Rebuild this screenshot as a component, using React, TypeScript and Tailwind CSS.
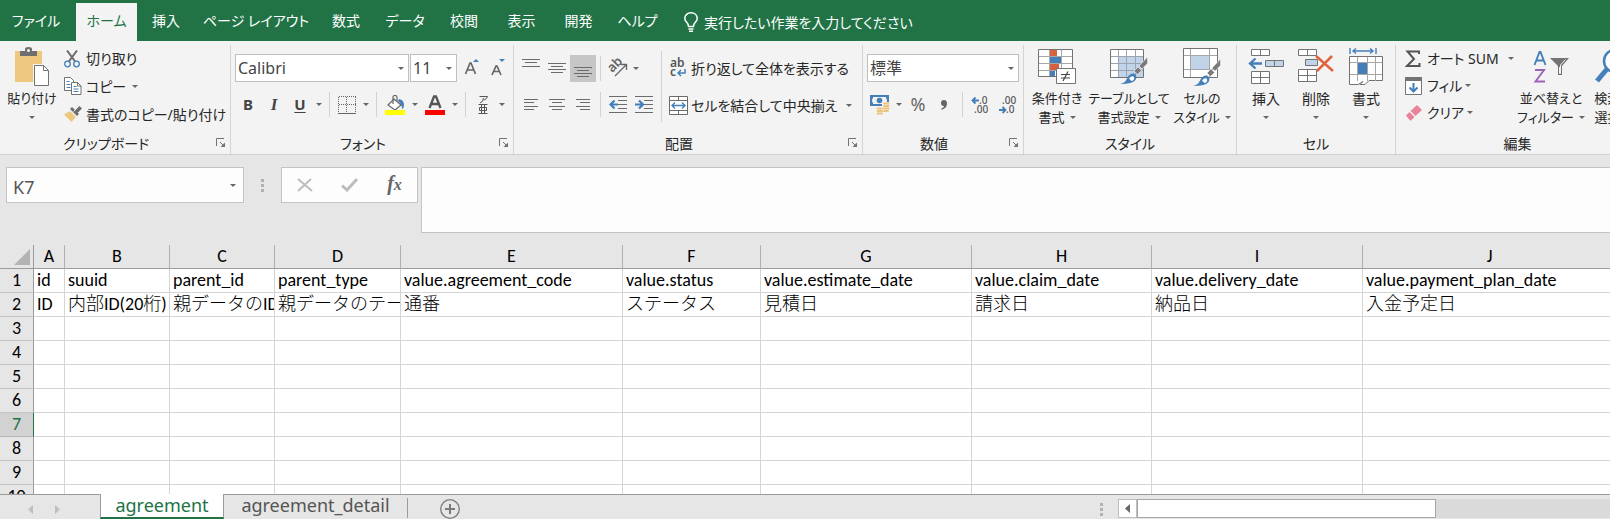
import React from 'react';
import type { ReactNode } from 'react';

const GRAY = '#737373';
const BLUE = '#457fb9';

/* ---------- small building blocks ---------- */

function Arrow({ className = '' }: { className?: string }) {
  return (
    <svg viewBox="0 0 6 3" className={`h-[3px] w-[6px] shrink-0 ${className}`} aria-hidden="true">
      <path d="M0 0h6L3 3z" fill="#666" />
    </svg>
  );
}

function Tool({ label, className = 'w-[26px]', children }: { label: string; className?: string; children: ReactNode }) {
  return (
    <button type="button" aria-label={label} className={`flex h-[27px] shrink-0 items-center justify-center ${className}`}>
      {children}
    </button>
  );
}

function Sep({ className = 'w-[9px]' }: { className?: string }) {
  return (
    <span className={`flex shrink-0 justify-center ${className}`}>
      <span className="h-[25px] w-px bg-[#d2d2d2]" />
    </span>
  );
}

function Combo({ label, value, className }: { label: string; value: string; className: string }) {
  return (
    <span className={`relative flex h-7 shrink-0 items-center border border-[#c0c0c0] bg-white ${className}`}>
      <select aria-label={label} className="h-full w-full appearance-none bg-transparent pl-[2px] text-[16px] text-[#444] outline-none">
        <option>{value}</option>
      </select>
      <Arrow className="pointer-events-none absolute right-[4px]" />
    </span>
  );
}

function Group({ title, className, launcher, children }: { title: string; className: string; launcher?: boolean; children: ReactNode }) {
  return (
    <section className={`flex shrink-0 flex-col border-r border-[#d4d4d4] ${className}`}>
      <div className="flex h-[88px]">{children}</div>
      <div className="flex h-[20px] items-center">
        <span className="flex-1 text-center">{title}</span>
        {launcher && (
          <button type="button" aria-label={`${title}の詳細`} className="flex w-[18px] items-center pl-1">
            <svg viewBox="0 0 10 10" className="h-[10px] w-[10px]" fill="none" stroke={GRAY}>
              <path d="M.5 8V.5H8M4 4l4 4" />
              <path d="M9 4.5V9H4.5z" fill={GRAY} stroke="none" />
            </svg>
          </button>
        )}
      </div>
    </section>
  );
}

function BigButton({ icon, lines, className }: { icon: ReactNode; lines: string[]; className: string }) {
  return (
    <button type="button" className={`flex shrink-0 flex-col items-center whitespace-nowrap leading-[19px] ${className}`}>
      <span className="flex h-[44px] items-center justify-center">{icon}</span>
      <span>{lines[0]}</span>
      <span className="flex h-[19px] items-center gap-[5px]">
        {lines[1]}
        <Arrow />
      </span>
    </button>
  );
}

function TextButton({ icon, label, arrow, className = 'h-7 gap-[9px]' }: { icon: ReactNode; label: string; arrow?: boolean; className?: string }) {
  return (
    <button type="button" className={`flex items-center whitespace-nowrap ${className}`}>
      <span className="flex items-center">
        <span className="flex w-[22px] shrink-0 items-center">{icon}</span>
        <span>{label}</span>
      </span>
      {arrow && <Arrow />}
    </button>
  );
}

/* ---------- icons ---------- */

const PasteIcon = () => (
  <svg viewBox="0 0 36 40" className="h-[40px] w-[36px]">
    <path d="M1 4h27v31H1z" fill="#edc87e" />
    <path d="M6 4h5V2q0-2 3.500-2T18 2v2h5v5H6z" fill="#6f6f6f" />
    <circle cx="14.500" cy="3.500" r="1.500" fill="#f3f3f3" />
    <path d="M19 17h12l6 6v17H19z" fill="#f3f3f3" />
    <path d="M20.500 18.500h9l5 5v15h-14z" fill="#fff" stroke={GRAY} />
    <path d="M29.500 18.500v5h5" fill="none" stroke={GRAY} />
  </svg>
);

const CutIcon = () => (
  <svg viewBox="0 0 16 18" className="h-[18px] w-[16px]" fill="none">
    <path d="M3 .500l8.500 11.500M13 .500L4.500 12" stroke="#6b6b6b" strokeWidth="2" />
    <circle cx="3.500" cy="14" r="2.800" stroke={BLUE} strokeWidth="1.300" />
    <circle cx="12.500" cy="14" r="2.800" stroke={BLUE} strokeWidth="1.300" />
  </svg>
);

const CopyIcon = () => (
  <svg viewBox="0 0 18 18" className="h-[18px] w-[18px]" fill="none">
    <path d="M.500.500h6l3 3v10h-9z" fill="#fff" stroke={GRAY} />
    <path d="M2.500 4.500h3M2.500 7.500h4M2.500 10.500h4" stroke={BLUE} />
    <path d="M7.500 5.500h6l3.500 3.500v8.500h-9.500z" fill="#fff" stroke={GRAY} />
    <path d="M13.500 5.500v3.500H17" stroke={GRAY} />
    <path d="M9.500 9.500h3M9.500 12h5M9.500 14.500h5" stroke={BLUE} />
  </svg>
);

const PainterIcon = () => (
  <svg viewBox="0 0 18 16" className="h-[16px] w-[18px]">
    <path d="M0 8.500l6-3.500 6 6-4.500 5z" fill="#edc87e" />
    <path d="M6 3l2-2 7 7-2 2z" fill="#6b6b6b" />
    <path d="M11 4.500L15.500 0 18 2.500 13.500 7z" fill="#6b6b6b" />
    <path d="M9.500 5.500l3-3" stroke="#f3f3f3" />
  </svg>
);

const LetterSize = ({ up }: { up?: boolean }) => (
  <svg viewBox="0 0 18 20" className="h-[20px] w-[18px]">
    <path d={up ? 'M2.500 16L7 5h1l4.500 11M4.300 12h6.400' : 'M3 17L7 8h1l4 9M4.500 13.500h6'} fill="none" stroke="#666" strokeWidth="1.700" />
    {up ? <path d="M10 4h6L13 1z" fill={BLUE} /> : <path d="M10 1h6L13 4z" fill={BLUE} />}
  </svg>
);

const BorderIcon = () => (
  <svg viewBox="0 0 18 18" className="h-[18px] w-[18px]" stroke="#666" fill="none">
    <path d="M.500.500h17M.500 8.500h17M.500.500v16M8.500.500v16M17.500.500v16" strokeDasharray="1 1" shapeRendering="crispEdges" />
    <path d="M0 17.500h18" shapeRendering="crispEdges" />
  </svg>
);

const FillIcon = () => (
  <svg viewBox="0 0 20 20" className="h-[20px] w-[20px]" fill="none">
    <path d="M9 4L16 10l-6 5-7-5z" fill="#fff" stroke="#666" strokeWidth="1.200" />
    <path d="M8 9V2.500Q8 .500 10 .500T12 2.500V6" stroke="#666" strokeWidth="1.200" />
    <path d="M14 4q5 1 5 6 0 3-2 4 0-5-4-8z" fill={BLUE} />
    <path d="M0 15h20v5H0z" fill="#ff0" />
  </svg>
);

const FontColorIcon = () => (
  <svg viewBox="0 0 20 20" className="h-[20px] w-[20px]" fill="none">
    <path d="M4.500 13L9 1.500h2L15.500 13M6 9h8" stroke="#555" strokeWidth="2.300" />
    <path d="M0 15h20v5H0z" fill="#f00" />
  </svg>
);

const HLines = ({ rows, width = 18, height = 18 }: { rows: [number, number, number][]; width?: number; height?: number }) => (
  <svg width={width} height={height} stroke="#6b6b6b" shapeRendering="crispEdges">
    {rows.map(([x1, x2, y]) => (
      <path key={y} d={`M${x1} ${y}.500H${x2}`} />
    ))}
  </svg>
);

const OrientationIcon = () => (
  <svg viewBox="0 0 20 20" className="h-[20px] w-[20px] overflow-visible" fill="none">
    <text x="0" y="11" transform="rotate(-45 7 8)" fill="#666" fontSize="13" fontWeight="600" fontFamily="Noto Sans">ab</text>
    <path d="M7 18L18 7M18.500 12V6.500H13" stroke="#666" strokeWidth="1.300" />
  </svg>
);

const IndentIcon = ({ right }: { right?: boolean }) => (
  <svg viewBox="0 0 18 17" className="h-[17px] w-[18px]" fill="none">
    <path d="M0 .500h18M9 4.500h9M9 8.500h9M9 12.500h9M0 16.500h18" stroke="#6b6b6b" shapeRendering="crispEdges" />
    <path d={right ? 'M0 8.500h7M4 4.500l4 4-4 4' : 'M9 8.500H2M5.500 4.500l-4 4 4 4'} stroke={BLUE} strokeWidth="2.200" />
  </svg>
);

const WrapIcon = () => (
  <svg viewBox="0 0 18 20" className="h-[20px] w-[18px] overflow-visible" fill="none">
    <text x="1" y="9" fill="#555" fontSize="12" fontWeight="600" fontFamily="Noto Sans">ab</text>
    <text x="1" y="18" fill="#555" fontSize="12" fontWeight="600" fontFamily="Noto Sans">c</text>
    <path d="M16 11v4H9M12 12l-3 3 3 3" stroke={BLUE} strokeWidth="1.500" />
  </svg>
);

const MergeIcon = () => (
  <svg viewBox="0 0 19 19" className="h-[19px] w-[19px]" fill="#fff" stroke="#6b6b6b">
    <path d="M.500.500h18v18H.500zM.500 4.500h18M.500 14.500h18M9.500.500v4M9.500 14.500v4" />
    <path d="M3 9.500h13M6 6.500l-3 3 3 3M13 6.500l3 3-3 3" stroke={BLUE} strokeWidth="1.400" fill="none" />
  </svg>
);

const CurrencyIcon = () => (
  <svg viewBox="0 0 20 20" className="h-[20px] w-[20px]">
    <path d="M0 0h19v11H0z" fill={BLUE} />
    <path d="M3 2h13v1q1 1 1 2.500T16 8v1H3V8Q2 7 2 5.500T3 3z" fill="#f3f3f3" />
    <circle cx="9.500" cy="5.500" r="2.800" fill={BLUE} />
    <path d="M12 7h8v11h-5v2H6v-8h6z" fill="#f3f3f3" />
    <path d="M14 8.500h4.500M14 11h4.500M14 13.500h4.500M14 16h4M7.500 13.500h4.500M7.500 16h4.500M7.500 18.500h4.500" stroke="#edc27a" strokeWidth="1.800" strokeLinecap="round" />
  </svg>
);

const DecimalIcon = ({ decrease }: { decrease?: boolean }) => (
  <svg viewBox="0 0 18 20" className="h-[20px] w-[18px] overflow-visible" fill="none">
    <text x={decrease ? 4 : 7} y="9" fill="#555" fontSize="10" fontWeight="500" fontFamily="Noto Sans">{decrease ? '.00' : '.0'}</text>
    <text x={decrease ? 8 : 2} y="18" fill="#555" fontSize="10" fontWeight="500" fontFamily="Noto Sans">{decrease ? '.0' : '.00'}</text>
    <path d={decrease ? 'M1 15h6M4.500 12l3 3-3 3' : 'M7 5.500H1M3.500 2.500l-3 3 3 3'} stroke={BLUE} strokeWidth="1.800" />
  </svg>
);

const ConditionalIcon = () => (
  <svg viewBox="0 0 38 36" className="h-[36px] w-[38px]" fill="none">
    <path d="M.500.500h34v27h-34z" fill="#fff" stroke={GRAY} />
    <path d="M11.500 1v26M23.500 1v26M1 7.500h33M1 14.500h33M1 21.500h33" stroke="#a6a6a6" />
    <path d="M12 1h7v6h-7zM12 15h9v6h-9z" fill="#d9603d" />
    <path d="M12 8h11v6H12zM12 22h5v5h-5z" fill={BLUE} />
    <path d="M18.500 19.500h19v15h-19z" fill="#fff" stroke={GRAY} />
    <path d="M23 25.500h9M23 29h9M30 22.500l-5 9.500" stroke="#444" strokeWidth="1.200" />
  </svg>
);

const Brush = () => (
  <>
    <path d="M37.500 8v6.500l-5.500 5.500-3-3zM28 18l3.500 3.500-4 4-3.500-3.500z" fill="#7b7b7b" stroke="#f3f3f3" strokeWidth=".600" />
    <path d="M10 35q5-1 7-5.500 2.500-5.500 7-5 4 2.500 1.500 6.500T10 35z" fill={BLUE} />
    <path d="M19 29.500q3-3.500 5-1.500 1 3-2.500 4z" fill="#fff" />
  </>
);

const TableFormatIcon = () => (
  <svg viewBox="0 0 38 36" className="h-[36px] w-[38px]" fill="none">
    <path d="M.500.500h33v28H.500z" fill="#fff" stroke={GRAY} />
    <path d="M9 8h24v20H9z" fill="#c0d3e9" />
    <path d="M8.500 1v27M16.500 1v27M25.500 1v27M1 7.500h32M1 14.500h32M1 21.500h32" stroke="#9ba5b0" />
    <Brush />
  </svg>
);

const CellStyleIcon = () => (
  <svg viewBox="0 0 38 39" className="h-[39px] w-[38px]" fill="none">
    <path d="M.500.500h34v29H.500z" fill="#fff" stroke={GRAY} />
    <path d="M7.500 1v28M26.500 1v28M1 7.500h33M1 21.500h33" stroke="#a6a6a6" />
    <path d="M8 8h18v13H8z" fill="#c0d3e9" />
    <g transform="translate(0 3)"><Brush /></g>
  </svg>
);

const InsertIcon = () => (
  <svg viewBox="0 0 36 36" className="h-[36px] w-[36px]" fill="#fff" stroke={GRAY}>
    <path d="M3.500.500h18v6h-18zM12.500.500v6M3.500 22.500h18v12h-18zM12.500 22.500v12M3.500 28.500h18" />
    <path d="M17.500 11.500h18v6h-18zM26.500 11.500v6" fill="#c0d3e9" />
    <path d="M14 14.500H2M7.500 9.500l-5.500 5 5.500 5" fill="none" stroke={BLUE} strokeWidth="2.300" />
  </svg>
);

const DeleteIcon = () => (
  <svg viewBox="0 0 36 36" className="h-[36px] w-[36px]" fill="#fff" stroke={GRAY}>
    <path d="M.500.500h18v6h-18zM9.500.500v6M.500 20.500h18v12h-18zM9.500 20.500v12M.500 26.500h18" />
    <path d="M7.500 10.500h12v6h-12z" fill="#c0d3e9" />
    <path d="M18 7l17 15M34 7L19 22" fill="none" stroke="#e0633c" strokeWidth="2.500" />
  </svg>
);

const FormatIcon = () => (
  <svg viewBox="0 0 34 38" className="h-[38px] w-[34px]" fill="none">
    <path d="M1 0v6M27 0v6M4 3h20M7 .500L4 3l3 2.500M21 .500L24 3l-3 2.500" stroke={BLUE} strokeWidth="1.400" />
    <path d="M.500 8.500h33v24H20l-4 4h-5l3-3-5 3H.500z" fill="#fff" stroke={GRAY} />
    <path d="M8.500 9v24M18.500 9v24M26.500 9v24M1 14.500h32M1 26.500h32" stroke="#a6a6a6" />
    <path d="M9 15h9v11H9z" fill={BLUE} />
  </svg>
);

const SigmaIcon = () => (
  <svg viewBox="0 0 16 18" className="h-[18px] w-[16px]" fill="none" stroke="#555" strokeWidth="2">
    <path d="M14 4V1.500H2.500L9 9l-7 7h12.500V13" />
  </svg>
);

const FillDownIcon = () => (
  <svg viewBox="0 0 17 18" className="h-[18px] w-[17px]" fill="none">
    <path d="M.500.500h16v17H.500z" fill="#fff" stroke={GRAY} />
    <path d="M0 0h17v4H0z" fill={GRAY} />
    <path d="M8.500 6v8M4.500 10.500l4 4 4-4" stroke={BLUE} strokeWidth="2" />
  </svg>
);

const EraserIcon = () => (
  <svg viewBox="0 0 17 16" className="h-[16px] w-[17px]">
    <path d="M1 10.500l3.500-3.500 5 5L6 15.500H5z" fill="#e8849a" />
    <path d="M5.500 6L12 0l5 5-6.500 6z" fill="#e8849a" />
  </svg>
);

const SortIcon = () => (
  <svg viewBox="0 0 36 34" className="h-[34px] w-[36px]" fill="none">
    <path d="M1.500 15L6.500 2h1l5 13M3.500 10.500h7" stroke={BLUE} strokeWidth="1.900" />
    <path d="M2 20h9L2.500 31.500H12" stroke="#9b63b8" strokeWidth="1.900" />
    <path d="M17 8h19l-7 8v9h-4v-9z" fill={GRAY} />
    <path d="M26.500 17v6.500h1V15l5-5.500" stroke="#f3f3f3" />
  </svg>
);

const FindIcon = () => (
  <svg viewBox="0 0 40 38" className="h-[38px] w-[40px]" fill="none" stroke={BLUE}>
    <circle cx="22" cy="13" r="11" strokeWidth="2.500" fill="#fff" />
    <path d="M14 21L4 33" strokeWidth="5" />
  </svg>
);

const BulbIcon = () => (
  <svg viewBox="0 0 14 20" className="h-[20px] w-[14px]" fill="none" stroke="#fff" strokeWidth="1.500">
    <path d="M4.500 14.500Q4.500 12 2.500 10 .800 8.300.800 6.500C.800 3 3.500.800 7 .800s6.200 2.200 6.200 5.700q0 1.800-1.700 3.500-2 2-2 4.500zM4.500 17h5M5 19.300h4" />
  </svg>
);

const Dots = () => (
  <svg viewBox="0 0 3 13" className="h-[13px] w-[3px]" fill="#b0b0b0">
    <path d="M0 0h3v3H0zM0 5h3v3H0zM0 10h3v3H0z" />
  </svg>
);

/* ---------- ribbon ---------- */

const TABS: [string, string][] = [
  ['ファイル', 'w-[72px] mr-1'],
  ['ホーム', 'w-[61px]'],
  ['挿入', 'w-[58px]'],
  ['ページ レイアウト', 'w-[122px]'],
  ['数式', 'w-[58px]'],
  ['データ', 'w-[60px]'],
  ['校閲', 'w-[58px]'],
  ['表示', 'w-[57px]'],
  ['開発', 'w-[57px]'],
  ['ヘルプ', 'w-[61px]'],
];

function TabBar() {
  return (
    <nav className="flex h-[41px] shrink-0 items-end bg-[#217346] text-[14px] text-white">
      {TABS.map(([name, width]) => (
        <button
          key={name}
          type="button"
          className={`h-[38px] shrink-0 whitespace-nowrap pb-[3px] ${width} ${name === 'ホーム' ? 'bg-[#f3f3f3] text-[#217346]' : ''}`}
        >
          {name}
        </button>
      ))}
      <button type="button" className="flex h-[38px] items-center gap-[6px] whitespace-nowrap pl-4">
        <BulbIcon />
        実行したい作業を入力してください
      </button>
    </nav>
  );
}

function Ribbon() {
  return (
    <div className="flex h-[114px] shrink-0 overflow-hidden border-b border-[#d0d0d0] bg-[#f3f3f3] pt-1 text-[14px] text-[#262626]">
      <Group title="クリップボード" launcher className="w-[231px]">
        <BigButton className="w-[64px] text-[13px]" icon={<PasteIcon />} lines={['貼り付け']} />
        <div className="flex flex-col">
          <TextButton icon={<CutIcon />} label="切り取り" className="h-[27px]" />
          <TextButton icon={<CopyIcon />} label="コピー" arrow className="h-[28px] gap-[6px]" />
          <TextButton icon={<PainterIcon />} label="書式のコピー/貼り付け" className="h-[28px]" />
        </div>
      </Group>

      <Group title="フォント" launcher className="w-[283px]">
        <div className="flex flex-col gap-[9px] pt-[9px] pl-1">
          <div className="flex items-center">
            <Combo label="フォント名" value="Calibri" className="mr-px w-[174px]" />
            <Combo label="フォント サイズ" value="11" className="mr-[2px] w-[47px]" />
            <Tool label="拡大"><LetterSize up /></Tool>
            <Tool label="縮小"><LetterSize /></Tool>
          </div>
          <div className="flex items-center font-[Noto_Sans] text-[15px] text-[#444]">
            <Tool label="太字"><b>B</b></Tool>
            <Tool label="斜体"><b className="font-[Liberation_Serif] text-[17px] italic">I</b></Tool>
            <Tool label="下線"><b className="underline underline-offset-2">U</b></Tool>
            <Tool label="下線の種類" className="w-[12px]"><Arrow /></Tool>
            <Sep />
            <Tool label="罫線"><BorderIcon /></Tool>
            <Tool label="罫線の種類" className="w-[12px]"><Arrow /></Tool>
            <Sep />
            <Tool label="塗りつぶし" className="w-[28px]"><FillIcon /></Tool>
            <Tool label="塗りつぶしの色" className="w-[12px]"><Arrow /></Tool>
            <Tool label="文字の色" className="w-[28px]"><FontColorIcon /></Tool>
            <Tool label="文字の色の選択" className="w-[12px]"><Arrow /></Tool>
            <Sep />
            <Tool label="ふりがな">
              <svg viewBox="0 0 10 19" className="h-[19px] w-[10px]" fill="none" stroke="#555">
                <path d="M1.500 1.500h8Q9 4 6 5M5.500 3q0 4-3.500 5M.500 9.500h9M.500 18.500h9M3.500 10v8M6.500 10v8M1.500 12.500h7v3h-7z" />
              </svg>
            </Tool>
            <Tool label="ふりがなの設定" className="w-[12px]"><Arrow /></Tool>
          </div>
        </div>
      </Group>

      <Group title="配置" launcher className="w-[349px]">
        <div className="flex flex-col gap-[9px] pt-[9px] pl-1">
          <div className="flex h-7 items-center">
            <Tool label="上揃え"><HLines height={20} rows={[[0, 18, 1], [3, 15, 4], [0, 18, 8]]} /></Tool>
            <Tool label="上下中央揃え"><HLines height={12} rows={[[0, 18, 1], [3, 15, 4], [0, 18, 7], [3, 15, 10]]} /></Tool>
            <Tool label="下揃え" className="w-[26px] bg-[#c6c6c6]"><HLines height={20} rows={[[0, 18, 9], [3, 15, 12], [0, 18, 15], [3, 15, 18]]} /></Tool>
            <Sep />
            <Tool label="方向"><OrientationIcon /></Tool>
            <Tool label="方向の選択" className="w-[9px]"><Arrow /></Tool>
          </div>
          <div className="flex items-center">
            <Tool label="左揃え"><HLines width={14} height={12} rows={[[0, 14, 0], [0, 10, 3], [0, 14, 7], [0, 10, 10]]} /></Tool>
            <Tool label="中央揃え"><HLines width={16} height={12} rows={[[0, 16, 0], [3, 13, 3], [0, 16, 7], [3, 13, 10]]} /></Tool>
            <Tool label="右揃え"><HLines width={14} height={12} rows={[[0, 14, 0], [4, 14, 3], [0, 14, 7], [4, 14, 10]]} /></Tool>
            <Sep />
            <Tool label="インデントを減らす"><IndentIcon /></Tool>
            <Tool label="インデントを増やす"><IndentIcon right /></Tool>
          </div>
        </div>
        <div className="mt-[6px] ml-1 h-[71px] border-l border-[#d2d2d2]" />
        <div className="flex flex-col gap-[9px] pt-[9px] pl-[7px]">
          <TextButton icon={<WrapIcon />} label="折り返して全体を表示する" />
          <TextButton icon={<MergeIcon />} label="セルを結合して中央揃え" arrow />
        </div>
      </Group>

      <Group title="数値" launcher className="w-[161px]">
        <div className="flex flex-col gap-[9px] pt-[9px] pl-1">
          <Combo label="表示形式" value="標準" className="w-[152px]" />
          <div className="flex items-center">
            <Tool label="通貨"><CurrencyIcon /></Tool>
            <Tool label="通貨の選択" className="w-[12px]"><Arrow /></Tool>
            <Tool label="パーセント"><span className="font-[Noto_Sans] text-[18px] text-[#666]">%</span></Tool>
            <Tool label="桁区切り">
              <svg viewBox="0 0 6 10" className="h-[10px] w-[6px]" fill="#666"><path d="M3 0q3 0 3 3.500Q6 8 .500 10V8.500Q3 7.500 3 6 0 6 0 3t3-3z" /></svg>
            </Tool>
            <Sep className="w-[11px]" />
            <Tool label="小数点以下を増やす"><DecimalIcon /></Tool>
            <Tool label="小数点以下を減らす"><DecimalIcon decrease /></Tool>
          </div>
        </div>
      </Group>

      <Group title="スタイル" className="w-[213px]">
        <BigButton className="ml-[2px] w-[62px] text-[13px]" icon={<ConditionalIcon />} lines={['条件付き', '書式']} />
        <BigButton className="w-[82px] text-[13px]" icon={<TableFormatIcon />} lines={['テーブルとして', '書式設定']} />
        <BigButton className="w-[64px] text-[13px]" icon={<CellStyleIcon />} lines={['セルの', 'スタイル']} />
      </Group>

      <Group title="セル" className="w-[159px]">
        <BigButton className="ml-1 w-[50px]" icon={<InsertIcon />} lines={['挿入']} />
        <BigButton className="w-[50px]" icon={<DeleteIcon />} lines={['削除']} />
        <BigButton className="w-[50px]" icon={<FormatIcon />} lines={['書式']} />
      </Group>

      <Group title="編集" className="w-[244px]">
        <div className="flex w-[120px] flex-col pl-[9px]">
          <TextButton className="h-[27px] gap-[9px]" icon={<SigmaIcon />} label="オート SUM" arrow />
          <TextButton className="h-[27px] gap-[3px]" icon={<FillDownIcon />} label="フィル" arrow />
          <TextButton className="h-[27px] gap-[3px]" icon={<EraserIcon />} label="クリア" arrow />
        </div>
        <BigButton className="w-[72px] text-[13px]" icon={<SortIcon />} lines={['並べ替えと', 'フィルター']} />
        <BigButton className="w-[52px] text-[13px]" icon={<FindIcon />} lines={['検索と', '選択']} />
      </Group>
    </div>
  );
}

/* ---------- formula bar ---------- */

function FormulaBar() {
  return (
    <div className="flex shrink-0 items-start bg-[#e6e6e6] pt-3 pb-3 pl-[6px]">
      <div className="flex h-9 w-[238px] shrink-0 items-center border border-[#c4c4c4] bg-[#fdfdfd] pr-[7px]">
        <input aria-label="名前ボックス" defaultValue="K7" className="min-w-0 flex-1 bg-transparent pt-1 pl-[6px] font-[Noto_Sans] text-[18px] text-[#555] outline-none" />
        <Arrow />
      </div>
      <div className="flex h-9 w-[37px] shrink-0 items-center justify-center"><Dots /></div>
      <div className="flex h-9 w-[137px] shrink-0 items-center border border-[#c4c4c4] bg-[#fdfdfd]">
        <button type="button" aria-label="キャンセル" className="flex flex-1 justify-center">
          <svg viewBox="0 0 16 14" className="h-[14px] w-[16px]" stroke="#bdbdbd" strokeWidth="2"><path d="M1 1l14 12M14 1L1 13" /></svg>
        </button>
        <button type="button" aria-label="入力" className="flex flex-1 justify-center">
          <svg viewBox="0 0 17 14" className="h-[14px] w-[17px]" fill="none" stroke="#bdbdbd" strokeWidth="3"><path d="M1 7.500l5 4.500L16 1" /></svg>
        </button>
        <button type="button" aria-label="関数の挿入" className="flex-1 pb-1 font-[Liberation_Serif] text-[20px] font-bold italic leading-none text-[#666]">
          f<span className="text-[16px]">x</span>
        </button>
      </div>
      <textarea aria-label="数式バー" className="ml-[3px] h-[66px] min-w-0 flex-1 resize-none border border-r-0 border-[#c4c4c4] bg-[#fdfdfd] outline-none" />
    </div>
  );
}

/* ---------- worksheet ---------- */

const COLUMNS = [
  { letter: 'A', width: 'w-[31px]', key: 'id', title: 'ID' },
  { letter: 'B', width: 'w-[105px]', key: 'suuid', title: '内部ID(20桁)' },
  { letter: 'C', width: 'w-[105px]', key: 'parent_id', title: '親データのID' },
  { letter: 'D', width: 'w-[126px]', key: 'parent_type', title: '親データのテー' },
  { letter: 'E', width: 'w-[222px]', key: 'value.agreement_code', title: '通番' },
  { letter: 'F', width: 'w-[138px]', key: 'value.status', title: 'ステータス' },
  { letter: 'G', width: 'w-[211px]', key: 'value.estimate_date', title: '見積日' },
  { letter: 'H', width: 'w-[180px]', key: 'value.claim_date', title: '請求日' },
  { letter: 'I', width: 'w-[211px]', key: 'value.delivery_date', title: '納品日' },
  { letter: 'J', width: '', key: 'value.payment_plan_date', title: '入金予定日' },
];

const ROWS = Array.from({ length: 40 }, (_, i) => i + 1);

function Sheet() {
  return (
    <div className="min-h-0 flex-1 overflow-hidden bg-white [font-feature-settings:normal]">
      <table className="w-full min-w-[1617px] table-fixed border-separate border-spacing-0 font-[Carlito,Lato,Noto_Sans_CJK_JP,sans-serif] text-[18px] leading-[23px] text-black">
        <colgroup>
          <col className="w-[34px]" />
          {COLUMNS.map((c) => <col key={c.letter} className={c.width} />)}
        </colgroup>
        <thead>
          <tr className="h-6 bg-[#e6e6e6]">
            <th className="border-r border-b border-[#9b9b9b] p-0">
              <svg viewBox="0 0 16 16" className="ml-auto mr-[3px] h-4 w-4"><path d="M16 0v16H0z" fill="#b3b3b3" /></svg>
            </th>
            {COLUMNS.map((c) => (
              <th key={c.letter} scope="col" className="border-r border-b border-r-[#b0b0b0] border-b-[#9b9b9b] p-0 font-normal">{c.letter}</th>
            ))}
          </tr>
        </thead>
        <tbody>
          {ROWS.map((n) => (
            <tr key={n} className="h-6">
              <th
                scope="row"
                className={`border-r border-b p-0 font-normal ${n === 7 ? 'border-r-[#217346] border-b-[#b5b5b5] bg-[#d2d2d2] text-[#217346]' : 'border-r-[#9b9b9b] border-b-[#c4c4c4] bg-[#e6e6e6]'}`}
              >
                {n}
              </th>
              {COLUMNS.map((c) => (
                <td key={c.letter} className="overflow-hidden border-r border-b border-[#d4d4d4] p-0 pl-[3px]">
                  <div className={`h-[23px] overflow-hidden whitespace-nowrap ${n === 2 ? 'font-light' : ''}`}>
                    {n === 1 ? c.key : n === 2 ? c.title : ''}
                  </div>
                </td>
              ))}
            </tr>
          ))}
        </tbody>
      </table>
    </div>
  );
}

function SheetTabs() {
  return (
    <footer className="flex h-[25px] shrink-0 border-t border-[#9b9b9b] bg-[#e6e6e6] font-[Noto_Sans] text-[18px] leading-[20px]">
      <div className="flex w-[100px] shrink-0 items-center gap-[22px] pt-1 pl-7">
        <button type="button" aria-label="前のシート"><svg viewBox="0 0 5 9" className="h-[9px] w-[5px]"><path d="M5 0v9L0 4.500z" fill="#bfbfbf" /></svg></button>
        <button type="button" aria-label="次のシート"><svg viewBox="0 0 5 9" className="h-[9px] w-[5px]"><path d="M0 0v9l5-4.500z" fill="#bfbfbf" /></svg></button>
      </div>
      <button type="button" className="-mt-px w-[124px] shrink-0 border-x border-b-2 border-x-[#9b9b9b] border-b-[#217346] bg-white pb-[2px] text-[#217346]">agreement</button>
      <button type="button" className="w-[183px] shrink-0 pb-[4px] text-[#555]">agreement_detail</button>
      <span className="mt-[3px] h-5 w-px shrink-0 bg-[#9b9b9b]" />
      <button type="button" aria-label="新しいシート" className="ml-8 shrink-0 pt-[3px]">
        <svg viewBox="0 0 20 20" className="h-5 w-5" fill="none" stroke="#7a7a7a"><circle cx="10" cy="10" r="9.300" strokeWidth="1.300" /><path d="M10 5v10M5 10h10" strokeWidth="2" /></svg>
      </button>
      <div className="ml-auto flex w-[510px] shrink-0 items-start pt-1">
        <span className="flex h-5 w-2 items-center"><Dots /></span>
        <button type="button" aria-label="左へスクロール" className="ml-[10px] flex h-[19px] w-[19px] items-center justify-center border border-[#bdbdbd] bg-white">
          <svg viewBox="0 0 5 9" className="h-[9px] w-[5px]"><path d="M5 0v9L0 4.500z" fill="#666" /></svg>
        </button>
        <div className="h-[19px] flex-1 bg-[#dadada]"><div className="h-full w-[299px] border border-[#a6a6a6] bg-white" /></div>
      </div>
    </footer>
  );
}

export default function App() {
  return (
    <main className="flex h-screen flex-col overflow-hidden bg-[#e6e6e6] font-[Noto_Sans,Noto_Sans_CJK_JP,sans-serif] [font-feature-settings:'palt']">
      <TabBar />
      <Ribbon />
      <FormulaBar />
      <Sheet />
      <SheetTabs />
    </main>
  );
}
